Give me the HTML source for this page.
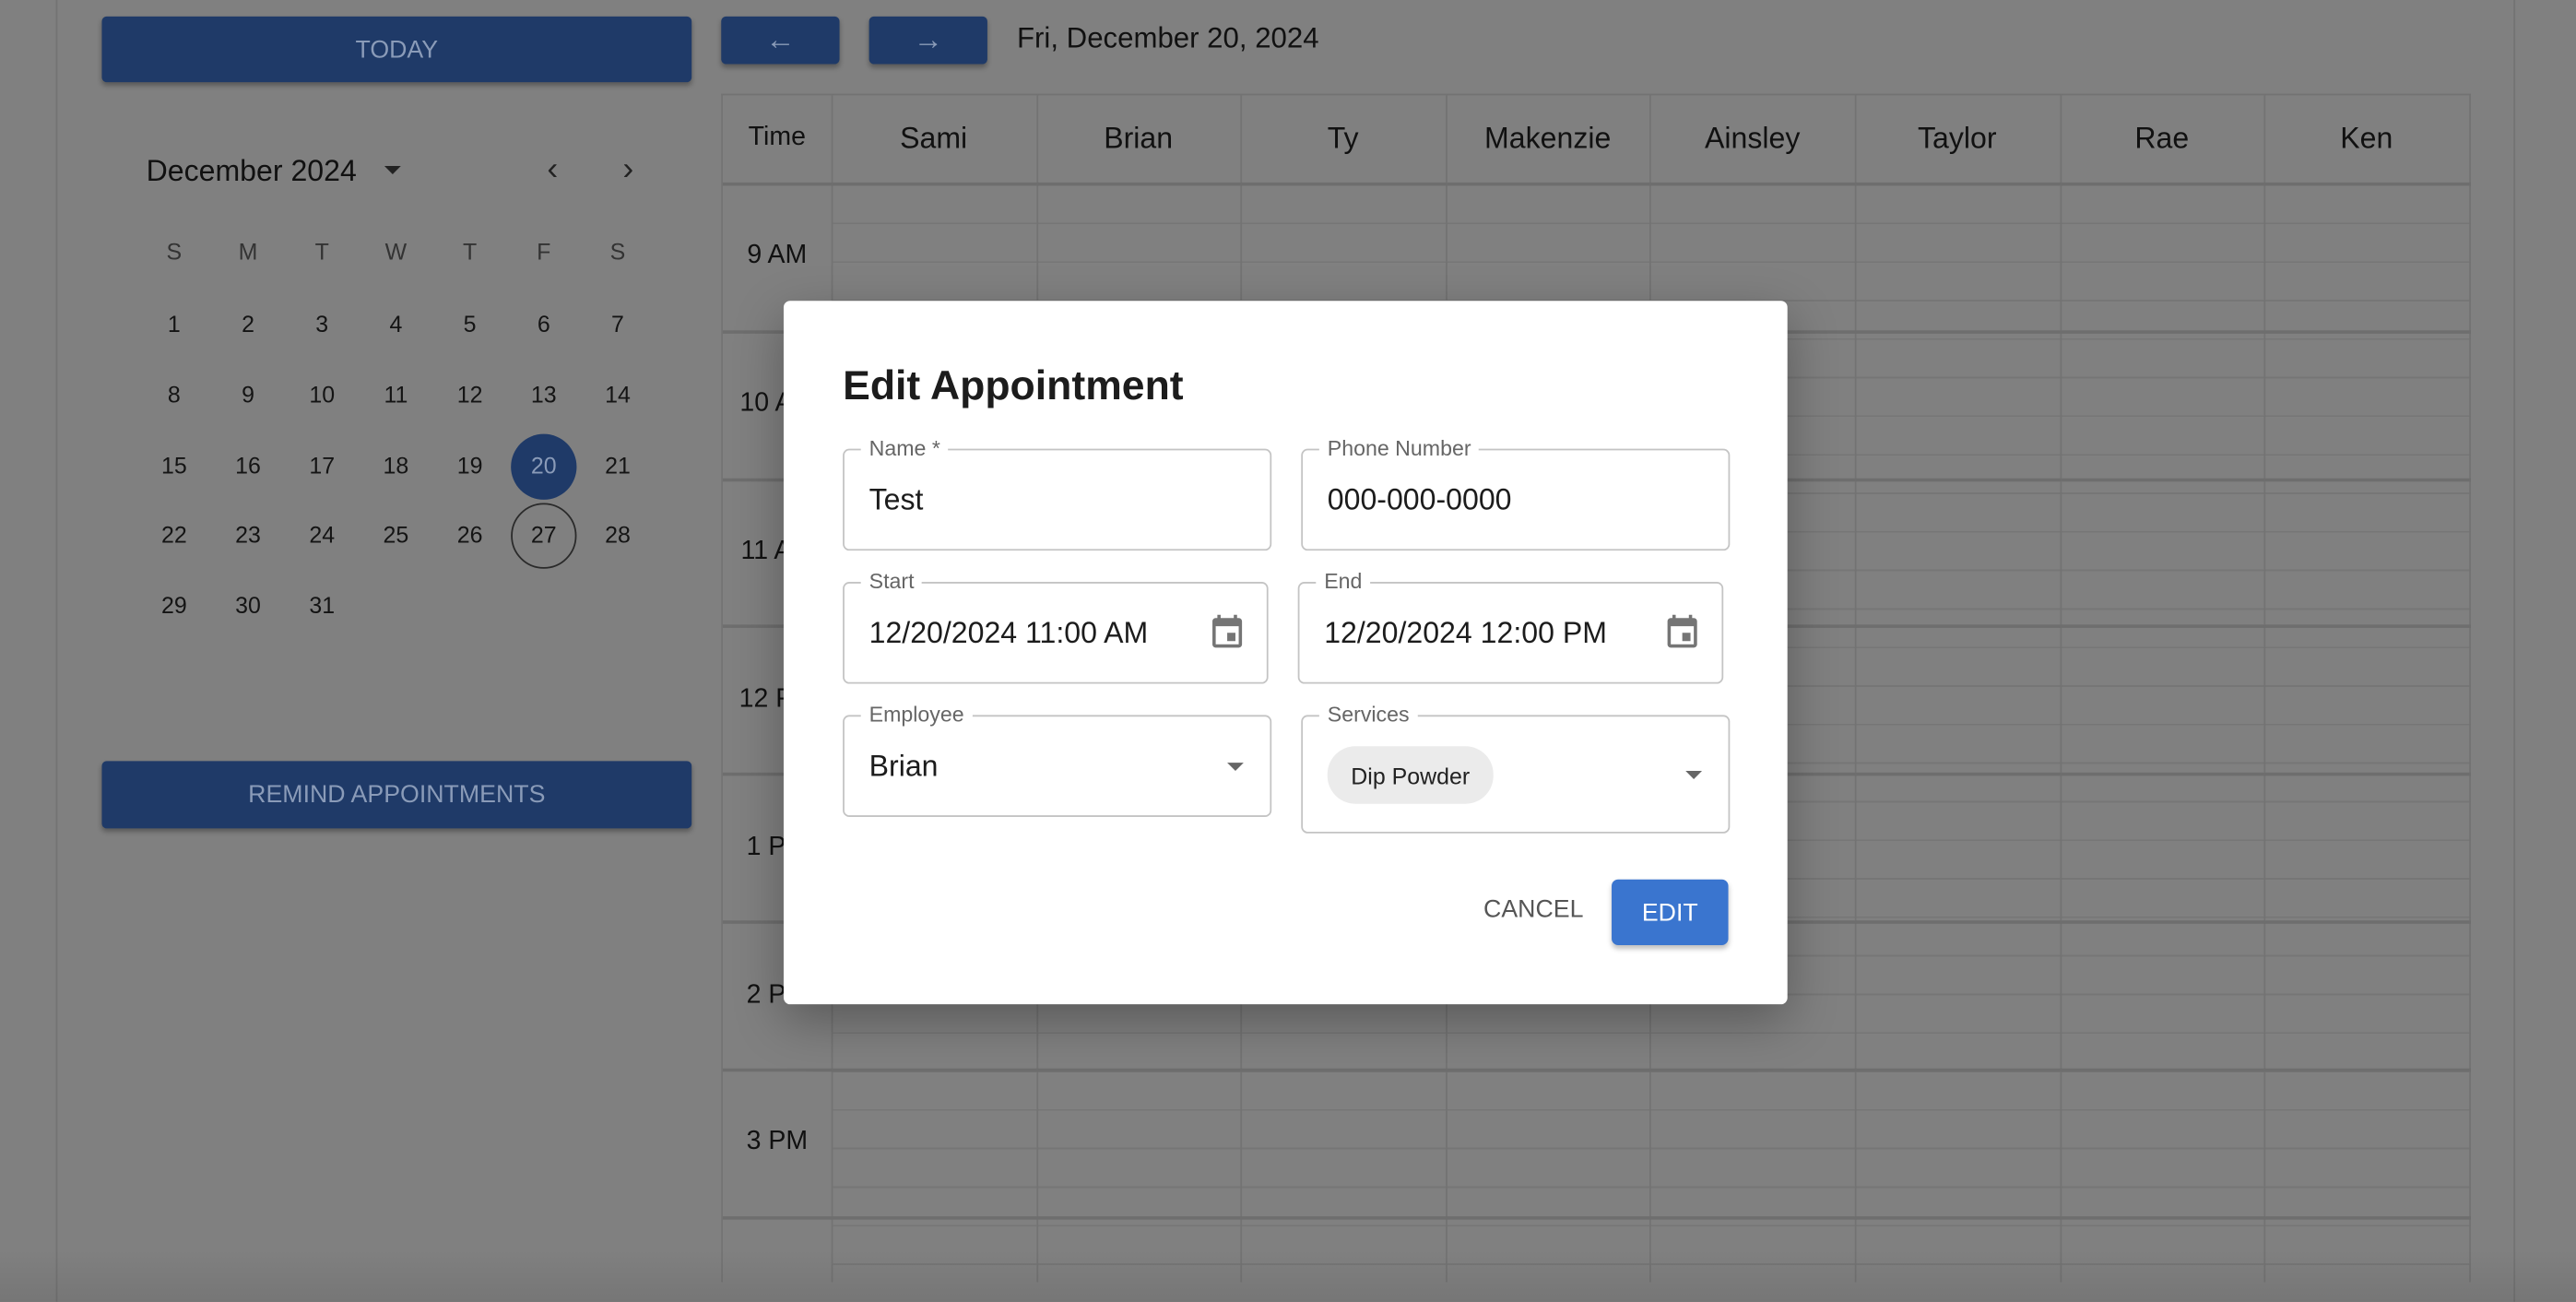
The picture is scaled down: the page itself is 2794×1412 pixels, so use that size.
<!DOCTYPE html>
<html><head><meta charset="utf-8"><style>
*{box-sizing:border-box;margin:0;padding:0}
html,body{width:2794px;height:1410px;overflow:hidden;background:#808080;font-family:"Liberation Sans",Roboto,sans-serif}
#w{position:absolute;left:0;top:0;width:1568px;height:792px;transform:scale(1.78189,1.7826);transform-origin:0 0;background:#808080}
.a{position:absolute}
.btn{position:absolute;background:#1f3a68;border-radius:3px;box-shadow:0 2px 3px rgba(0,0,0,.3);color:#8a9bb8;font-size:15px;display:flex;align-items:center;justify-content:center}
.c{position:absolute;width:30px;text-align:center;font-size:14px;color:#141414;margin-left:-15px}
.h{position:absolute;font-size:18px;color:#111;text-align:center;top:74px;width:124.6px}
.tl{position:absolute;left:440px;width:66px;text-align:center;font-size:16px;color:#111}
.f{position:absolute;border:1px solid #c4c4c4;border-radius:4px}
.lb{position:absolute;top:-9px;left:10px;background:#fff;padding:0 5px;font-size:13px;color:#666;line-height:16px}
.v{position:absolute;left:15px;font-size:18px;color:#1c1c1c}
</style></head><body><div id="w">
<div class="a" style="left:34px;top:0;width:1px;height:792px;background:#737373"></div>
<div class="a" style="left:1530px;top:0;width:1px;height:792px;background:#737373"></div>
<div class="btn" style="left:62px;top:10px;width:359px;height:40px">TODAY</div>
<div class="btn" style="left:439px;top:10px;width:72px;height:29px;font-size:18px">&#8592;</div>
<div class="btn" style="left:529px;top:10px;width:72px;height:29px;font-size:18px">&#8594;</div>
<div class="a" style="left:619px;top:13px;font-size:17.5px;color:#111">Fri, December 20, 2024</div>
<div class="a" style="left:89px;top:94px;font-size:18px;color:#111">December 2024</div>
<div class="a" style="left:234px;top:101px;width:0;height:0;border-left:5px solid transparent;border-right:5px solid transparent;border-top:5px solid #222"></div>
<div class="a" style="left:333px;top:92px;font-size:20px;color:#222">&#8249;</div>
<div class="a" style="left:379px;top:92px;font-size:20px;color:#222">&#8250;</div>
<div class="a" style="left:311px;top:264px;width:40px;height:40px;border-radius:50%;background:#1f3a68"></div>
<div class="a" style="left:311px;top:306px;width:40px;height:40px;border-radius:50%;border:1px solid #2a2a2a"></div>
<div class="btn" style="left:62px;top:463px;width:359px;height:41px">REMIND APPOINTMENTS</div>
<div id="cal"></div>
<div class="a" style="left:439px;top:57px;width:1065px;height:723px;border:1px solid #737373;border-bottom:none;background:
repeating-linear-gradient(to bottom,transparent 0,transparent 22.45px,#767676 22.45px,#767676 23.45px) 67px 55px/998px 668px no-repeat"></div>
<div id="g"></div>
<div class="tl" style="top:75px">Time</div>
<div class="tl" style="top:147px">9 AM</div>
<div class="tl" style="top:237px">10 AM</div>
<div class="tl" style="top:327px">11 AM</div>
<div class="tl" style="top:417px">12 PM</div>
<div class="tl" style="top:507px">1 PM</div>
<div class="tl" style="top:597px">2 PM</div>
<div class="tl" style="top:686px">3 PM</div>
<div class="a" style="left:0;top:760px;width:1568px;height:32px;background:linear-gradient(transparent,rgba(0,0,0,.08))"></div>
<div class="a" style="left:477px;top:183px;width:611px;height:428px;background:#fff;border-radius:4px;box-shadow:0 10px 30px rgba(0,0,0,.3)">
<div class="a" style="left:36px;top:38px;font-size:25px;font-weight:bold;color:#1c1c1c">Edit Appointment</div>
<div class="f" style="left:36px;top:90px;width:261px;height:62px"><span class="lb">Name *</span><span class="v" style="top:20px">Test</span></div>
<div class="f" style="left:315px;top:90px;width:261px;height:62px"><span class="lb">Phone Number</span><span class="v" style="top:20px">000-000-0000</span></div>
<div class="f" style="left:36px;top:171px;width:259px;height:62px"><span class="lb">Start</span><span class="v" style="top:20px">12/20/2024 11:00 AM</span>
<svg class="a" style="left:221px;top:18px" width="24" height="24" viewBox="0 0 24 24"><path fill="#757575" d="M17 12h-5v5h5v-5zM16 1v2H8V1H6v2H5c-1.1 0-2 .9-2 2v14c0 1.1.9 2 2 2h14c1.1 0 2-.9 2-2V5c0-1.1-.9-2-2-2h-1V1h-2zm3 18H5V8h14v11z"/></svg></div>
<div class="f" style="left:313px;top:171px;width:259px;height:62px"><span class="lb">End</span><span class="v" style="top:20px">12/20/2024 12:00 PM</span>
<svg class="a" style="left:221px;top:18px" width="24" height="24" viewBox="0 0 24 24"><path fill="#757575" d="M17 12h-5v5h5v-5zM16 1v2H8V1H6v2H5c-1.1 0-2 .9-2 2v14c0 1.1.9 2 2 2h14c1.1 0 2-.9 2-2V5c0-1.1-.9-2-2-2h-1V1h-2zm3 18H5V8h14v11z"/></svg></div>
<div class="f" style="left:36px;top:252px;width:261px;height:62px"><span class="lb">Employee</span><span class="v" style="top:20px">Brian</span>
<div class="a" style="left:233px;top:28px;border-left:5px solid transparent;border-right:5px solid transparent;border-top:5px solid #666"></div></div>
<div class="f" style="left:315px;top:252px;width:261px;height:72px"><span class="lb">Services</span>
<div class="a" style="left:15px;top:18px;width:101px;height:35px;border-radius:17px;background:#ebebeb;font-size:14px;color:#222;display:flex;align-items:center;justify-content:center">Dip Powder</div>
<div class="a" style="left:233px;top:33px;border-left:5px solid transparent;border-right:5px solid transparent;border-top:5px solid #666"></div></div>
<div class="a" style="left:426px;top:362px;font-size:15px;color:#555">CANCEL</div>
<div class="a" style="left:504px;top:352px;width:71px;height:40px;background:#3a75cf;border-radius:4px;box-shadow:0 2px 3px rgba(0,0,0,.25);color:#fff;font-size:15px;display:flex;align-items:center;justify-content:center">EDIT</div>
</div>
</div>
<script>
var g='';var xs=[506,630.6,755.2,879.8,1004.4,1129,1253.6,1378.2];
var n=['Sami','Brian','Ty','Makenzie','Ainsley','Taylor','Rae','Ken'];
for(var i=0;i<8;i++){g+='<div class="a" style="left:'+xs[i]+'px;top:57px;width:1px;height:723px;background:#737373"></div><div class="h" style="left:'+xs[i]+'px">'+n[i]+'</div>';}
var hy=[112,202,292,381,471,561,651,741];
for(var j=0;j<hy.length;j++)g+='<div class="a" style="left:440px;top:'+(hy[j]-1)+'px;width:1064px;height:2px;background:#6e6e6e"></div>';
document.getElementById('g').innerHTML=g;
var c='',cx=[106,151,196,241,286,331,376],dn=['S','M','T','W','T','F','S'];
for(var k=0;k<7;k++)c+='<div class="c" style="left:'+cx[k]+'px;top:145px;color:#333">'+dn[k]+'</div>';
var ry=[189,232,275,317,360];
for(var d=1;d<=31;d++){var p=d-1,r=Math.floor(p/7),col=p%7;c+='<div class="c" style="left:'+cx[col]+'px;top:'+ry[r]+'px;'+(d==20?'color:#8a9bb8':'')+'">'+d+'</div>';}
document.getElementById('cal').innerHTML=c;
</script>
</body></html>
